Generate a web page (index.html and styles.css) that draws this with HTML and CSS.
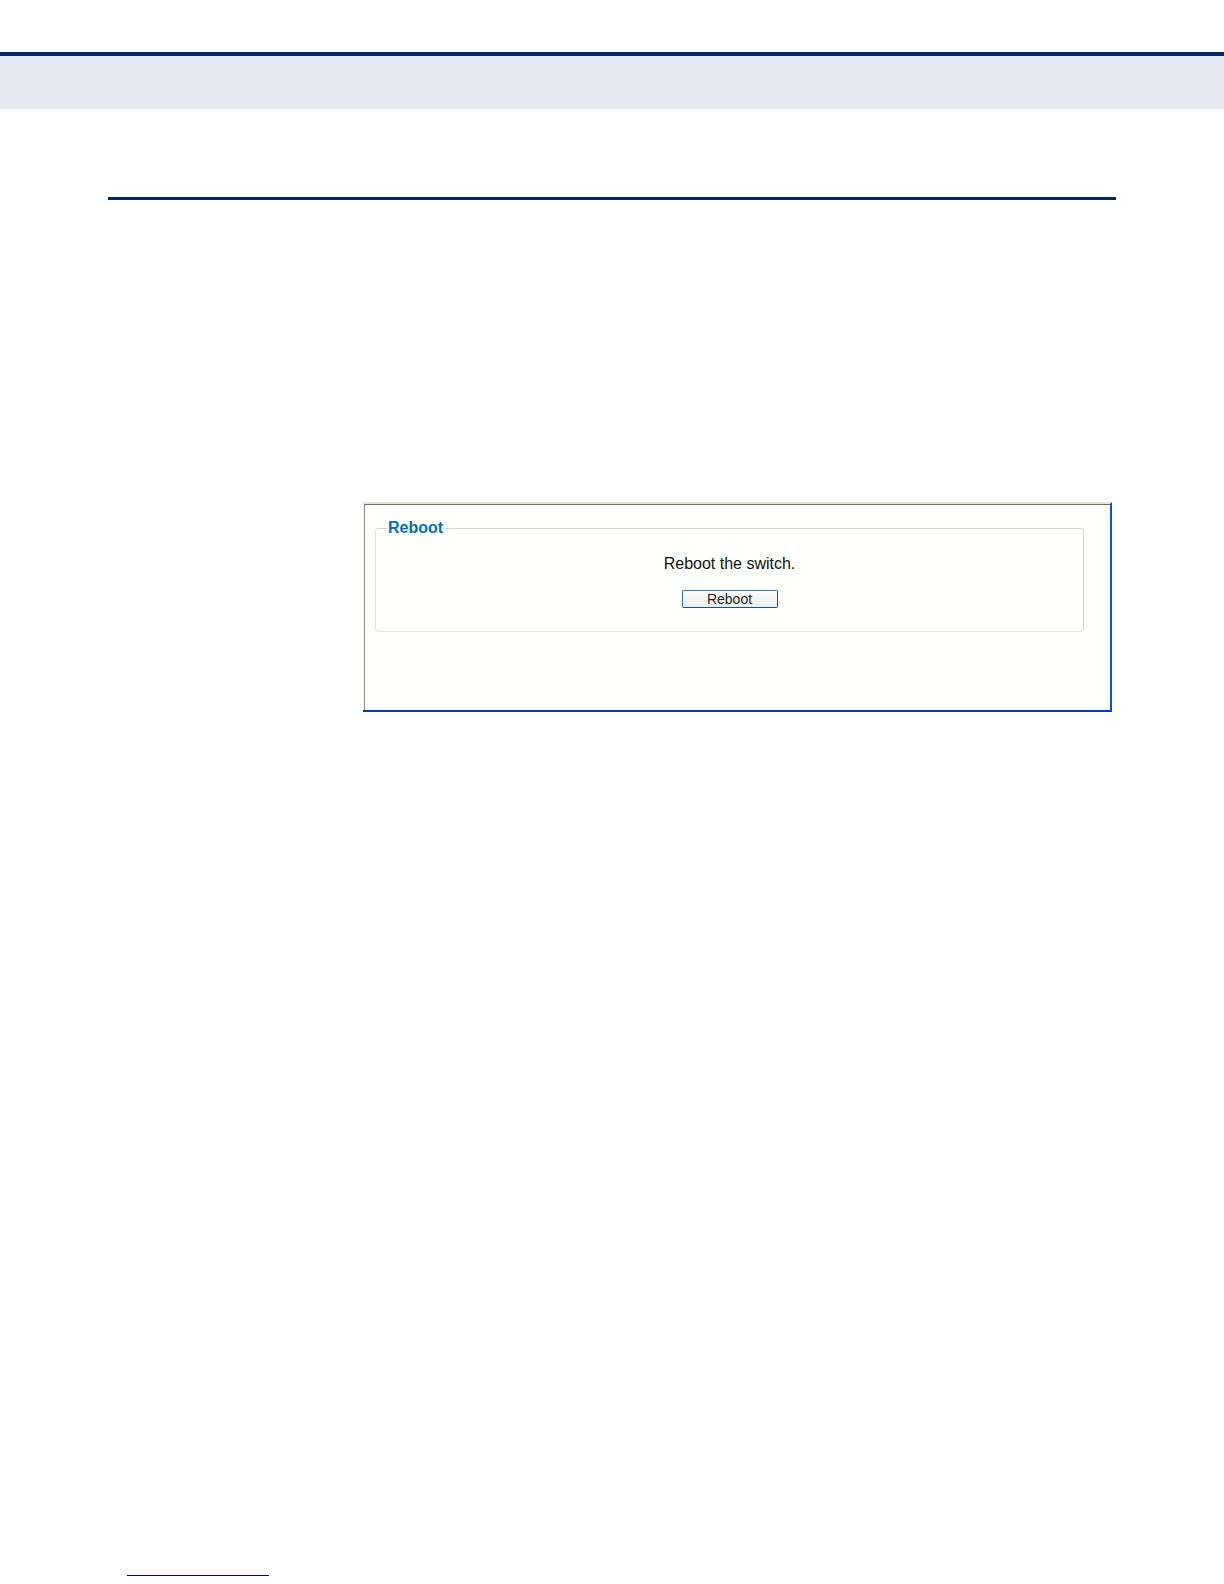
FILE: index.html
```
<!DOCTYPE html>
<html lang="en">
<head>
<meta charset="UTF-8">
<meta name="viewport" content="width=device-width, initial-scale=1.0">
<title>Reboot</title>
<link rel="stylesheet" href="styles.css">
</head>
<body>

<header class="band"></header>

<main class="content">
  <hr class="rule">
  <div class="frame">
    <form class="panel">
      <fieldset class="group">
        <legend>Reboot</legend>
        <p>Reboot the switch.</p>
        <button type="button">Reboot</button>
      </fieldset>
    </form>
  </div>
</main>

<footer class="footer">
  <hr class="footer-rule">
</footer>

</body>
</html>
```

FILE: styles.css
```
* {
  box-sizing: border-box;
}
body {
  display: flex;
  flex-direction: column;
  min-height: 100vh;
  margin: 0;
  padding-top: 52px;
  background-color: #fff;
  font-family: "Liberation Sans", Arial, sans-serif;
  font-size: 16px;
  line-height: 18px;
}
.band {
  height: 57px;
  background-color: #e4e8f0;
  border-top: 4px solid #00285e;
}
.content {
  flex: 1;
  padding: 88px 108px 0;
}
.rule {
  height: 3px;
  margin: 0;
  border: none;
  background-color: #00285e;
}

/* browser window around the form */
.frame {
  margin: 302px 4px 0 255px;
  border-top: 2px solid #e6e4d8;
  border-right: 2px solid #0a50d8;
  border-bottom: 2px solid #0638b8;
}
.panel {
  min-height: 206px;
  margin-left: 1px;
  padding: 14px 26px 0 10px;
  border-top: 1px solid #716f64;
  border-left: 1px solid #8a8880;
  background-color: #fffffe;
}
.group {
  display: flex;
  flex-direction: column;
  align-items: center;
  min-width: 0;
  margin: 0;
  padding: 18px 11px 23px;
  border: 1px solid #d4d4d4;
  border-left-color: #e2e2e2;
  border-bottom-color: #e2e2e2;
  border-radius: 4px;
}
legend {
  padding: 0 0 0 1px;
  color: #0070bb;
  font-weight: bold;
}
.group p {
  margin: 0 0 17px;
  color: #111;
}
button {
  width: 96px;
  height: 18px;
  padding: 0;
  border: 1px solid #3f77a8;
  border-right-color: #174f87;
  border-bottom-color: #174f87;
  border-radius: 2px;
  background: linear-gradient(#fcfcfb, #eceee9);
  color: #222;
  font-family: inherit;
  font-size: 14px;
  line-height: 16px;
}

.footer {
  padding: 0 127px 8px;
}
.footer-rule {
  width: 142px;
  height: 1px;
  margin: 0;
  border: none;
  background-color: #000080;
}
```
